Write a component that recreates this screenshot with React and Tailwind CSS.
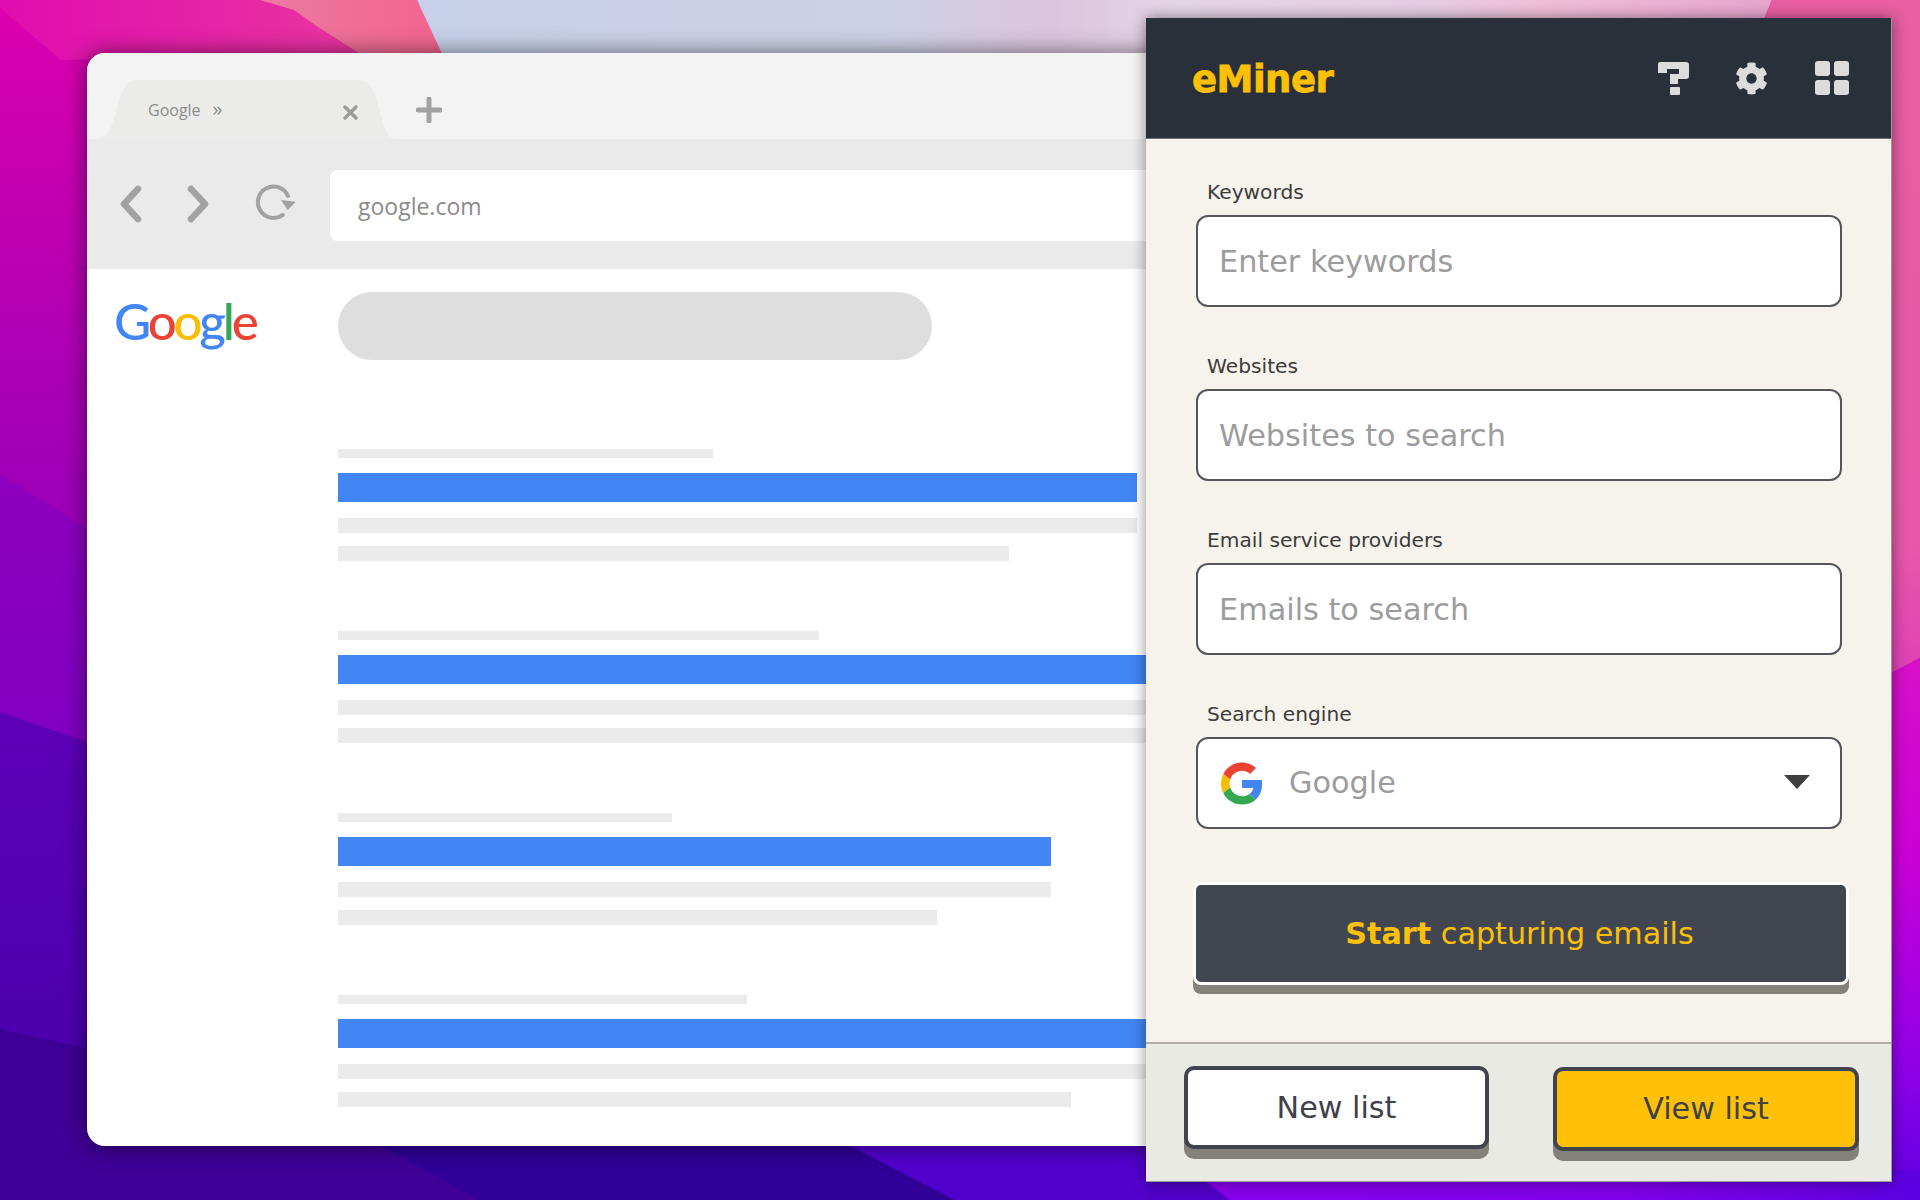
import React from "react";
import { FaCog } from "react-icons/fa";

function Wallpaper() {
  return (
    <svg className="absolute inset-0" width="1920" height="1200" viewBox="0 0 1920 1200">
      <defs>
        <linearGradient id="a" gradientUnits="userSpaceOnUse" x1="0" y1="0" x2="0" y2="500">
          <stop offset="0" stopColor="#dc00ae" />
          <stop offset="1" stopColor="#9c00b8" />
        </linearGradient>
        <linearGradient id="b" gradientUnits="userSpaceOnUse" x1="0" y1="474" x2="0" y2="740">
          <stop offset="0" stopColor="#8f00be" />
          <stop offset="1" stopColor="#8000c2" />
        </linearGradient>
        <linearGradient id="c" gradientUnits="userSpaceOnUse" x1="0" y1="712" x2="0" y2="1050">
          <stop offset="0" stopColor="#5e00b8" />
          <stop offset="1" stopColor="#4c00ae" />
        </linearGradient>
        <linearGradient id="top" x1="0" y1="0" x2="1" y2="0">
          <stop offset="0" stopColor="#e00cb0" />
          <stop offset="1" stopColor="#ea35a0" />
        </linearGradient>
        <linearGradient id="pk" x1="0" y1="0" x2="1" y2="0">
          <stop offset="0" stopColor="#ec7aa2" />
          <stop offset="1" stopColor="#f2638f" />
        </linearGradient>
        <linearGradient id="lav" x1="0" y1="0" x2="1" y2="0">
          <stop offset="0" stopColor="#c6d0e8" />
          <stop offset="0.36" stopColor="#ced0e6" />
          <stop offset="0.47" stopColor="#dcc4de" />
          <stop offset="0.56" stopColor="#e4d6e6" />
          <stop offset="0.75" stopColor="#e7cce2" />
          <stop offset="0.83" stopColor="#efbfd6" />
          <stop offset="1" stopColor="#e8a4cf" />
        </linearGradient>
        <linearGradient id="rt" x1="0" y1="0" x2="0" y2="1">
          <stop offset="0" stopColor="#e85fa3" />
          <stop offset="0.8" stopColor="#e758a8" />
          <stop offset="1" stopColor="#e040b8" />
        </linearGradient>
        <linearGradient id="rb" x1="0" y1="0" x2="0" y2="1">
          <stop offset="0" stopColor="#d810c8" />
          <stop offset="0.35" stopColor="#cc00d6" />
          <stop offset="0.75" stopColor="#9000e8" />
          <stop offset="1" stopColor="#5e00e0" />
        </linearGradient>
        <linearGradient id="bt" x1="0" y1="0" x2="1" y2="0">
          <stop offset="0" stopColor="#8800ec" />
          <stop offset="0.6" stopColor="#8000ea" />
          <stop offset="1" stopColor="#5c00e0" />
        </linearGradient>
      </defs>
      <rect width="1920" height="1200" fill="url(#a)" />
      <polygon points="0,0 300,0 360,53 61,60 0,8" fill="url(#top)" />
      <polygon points="0,474 87,528 1200,528 1200,1200 0,1200" fill="url(#b)" />
      <polygon points="0,712 87,742 1200,742 1200,1200 0,1200" fill="url(#c)" />
      <polygon points="0,1029 87,1048 1200,1048 1200,1200 0,1200" fill="#3e0096" />
      <path d="M260 0 H417 L445 53 H359 L318 27 L294 10 Z" fill="url(#pk)" />
      <polygon points="417,0 1772,0 1747,60 445,60" fill="url(#lav)" />
      <polygon points="1772,0 1920,0 1920,658 1880,679 1700,679 1700,60 1747,60" fill="url(#rt)" />
      <polygon points="1880,679 1920,658 1920,1200 1880,1200" fill="url(#rb)" />
      <polygon points="380,1146 850,1146 960,1200 480,1200" fill="#300098" />
      <polygon points="850,1146 1220,1146 1220,1200 955,1200" fill="#5200cc" />
      <polygon points="1190,1170 1920,1170 1920,1200 1230,1200" fill="url(#bt)" />
      <polygon points="1146,1170 1190,1170 1230,1200 1146,1200" fill="#5000c8" />
    </svg>
  );
}

function ResultRow({ small, blue, line1, line2 }) {
  return (
    <div className="flex flex-col mb-[70px]">
      <div className="h-[9px] bg-[#ebebeb]" style={{ width: small }} />
      <div className="h-[29px] mt-[15px] bg-[#4285f4]" style={{ width: blue }} />
      <div className="h-[15px] mt-[16px] bg-[#ebebeb]" style={{ width: line1 }} />
      <div className="h-[15px] mt-[13px] bg-[#ebebeb]" style={{ width: line2 }} />
    </div>
  );
}

function BrowserWindow() {
  return (
    <div className="absolute left-[87px] top-[53px] w-[1160px] h-[1093px] rounded-[18px] bg-white overflow-hidden shadow-[0_0_22px_rgba(0,0,0,0.55)] font-['Open_Sans',sans-serif]">
      <div className="h-[86px] bg-[#f3f3f3] flex items-end pl-[9px]">
        <div className="relative w-[301px] h-[59px] flex items-center">
          <svg className="absolute inset-0" width="301" height="59" viewBox="0 0 301 59">
            <path d="M0 59 C14 59 17 42 21 28 C25 12 29 0 42 0 H262 C275 0 279 12 283 28 C287 42 290 59 301 59 Z" fill="#ebebea" />
          </svg>
          <span className="relative ml-[52px] text-[16px] text-[#8c8c8c] leading-none">Google</span>
          <span className="relative ml-[12px] text-[20px] text-[#8c8c8c] leading-none -mt-[2px]">»</span>
          <svg className="absolute left-[247px] top-[25px]" width="15" height="15" viewBox="0 0 15 15">
            <path d="M2 2 L13 13 M13 2 L2 13" stroke="#9b9b9b" strokeWidth="3.4" strokeLinecap="round" />
          </svg>
        </div>
        <svg className="ml-[19px] mb-[16px]" width="26" height="26" viewBox="0 0 26 26">
          <path d="M13 2 V24 M2 13 H24" stroke="#a2a2a2" strokeWidth="5" strokeLinecap="round" />
        </svg>
      </div>
      <div className="h-[130px] bg-[#eaeaea] flex items-start">
        <svg className="ml-[32px] mt-[46px]" width="24" height="38" viewBox="0 0 24 38">
          <path d="M19 4 L5 19 L19 34" fill="none" stroke="#a2a2a2" strokeWidth="6.5" strokeLinecap="round" strokeLinejoin="round" />
        </svg>
        <svg className="ml-[43px] mt-[46px]" width="24" height="38" viewBox="0 0 24 38">
          <path d="M5 4 L19 19 L5 34" fill="none" stroke="#a2a2a2" strokeWidth="6.5" strokeLinecap="round" strokeLinejoin="round" />
        </svg>
        <svg className="ml-[45px] mt-[45px]" width="42" height="38" viewBox="0 0 42 38">
          <path d="M27.7 31 A15.7 15.7 0 1 1 33 12" fill="none" stroke="#a2a2a2" strokeWidth="4" strokeLinecap="round" />
          <path d="M26 16 L40.7 17.7 L32.7 26 Z" fill="#a2a2a2" />
        </svg>
        <div className="ml-[33px] mt-[31px] h-[71px] flex-1 bg-white rounded-l-[8px] flex items-center pl-[28px] pt-[2px] text-[23px] text-[#8b8b8b]">
          google.com
        </div>
      </div>
      <div className="flex">
        <div className="w-[251px] pl-[27px] pt-[20px] text-[51px] leading-[64px] font-medium tracking-[-3.2px] font-['Lato',sans-serif]">
          <span className="text-[#4285f4]">G</span>
          <span className="text-[#ea4335]">o</span>
          <span className="text-[#fbbc05]">o</span>
          <span className="text-[#4285f4]">g</span>
          <span className="text-[#34a853]">l</span>
          <span className="text-[#ea4335]">e</span>
        </div>
        <div className="flex-1 flex flex-col pt-[23px]">
          <div className="w-[594px] h-[68px] rounded-full bg-[#dedede] mb-[89px]" />
          <ResultRow small={375} blue={799} line1={799} line2={671} />
          <ResultRow small={481} blue={830} line1={830} line2={830} />
          <ResultRow small={334} blue={713} line1={713} line2={599} />
          <ResultRow small={409} blue={830} line1={830} line2={733} />
        </div>
      </div>
    </div>
  );
}

function Field({ label, children }) {
  return (
    <div className="flex flex-col mb-[45px]">
      <div className="h-[28px] mb-[9px] flex items-center pl-[11px] text-[20.2px] text-[#3c3c3c]">{label}</div>
      {children}
    </div>
  );
}

function TextInput({ placeholder }) {
  return (
    <input
      placeholder={placeholder}
      className="w-[646px] h-[92px] rounded-[12px] border-[2px] border-[#55565c] bg-white px-[21px] text-[30.3px] outline-none placeholder:text-[#9c9c9c]"
    />
  );
}

function Panel() {
  return (
    <div className="absolute left-[1146px] top-[18px] w-[746px] h-[1164px] flex flex-col border-r border-b border-[#9a9a96] shadow-[0_0_14px_rgba(0,0,0,0.45)] font-['DejaVu_Sans',sans-serif]">
      <div className="h-[121px] bg-[#29303a] border-b-[1px] border-[#6c7178] flex items-center pl-[46px] pr-[42px]">
        <span className="text-[37px] mt-[2px] font-bold leading-none text-[#fdc006] tracking-[-0.5px] [-webkit-text-stroke:0.8px_#fdc006]">eMiner</span>
        <div className="ml-auto flex items-center">
          <svg width="31" height="33" viewBox="0 0 31 33" className="mt-[1px]">
            <path d="M2 0 H28 a3 3 0 0 1 3 3 V14 a3 3 0 0 1 -3 3 H20 V22 H12 V12 H21 V7 H9 V11 H0 V2 a2 2 0 0 1 2 -2 Z" fill="#dcdcdc" />
            <rect x="12" y="25" width="10" height="8" rx="1" fill="#dcdcdc" />
          </svg>
          <FaCog className="ml-[46px] text-[#dcdcdc] text-[33px]" />
          <div className="ml-[47px] grid grid-cols-2 gap-[4px]">
            <div className="w-[15px] h-[15px] rounded-[3px] bg-[#dcdcdc]" />
            <div className="w-[15px] h-[15px] rounded-[3px] bg-[#dcdcdc]" />
            <div className="w-[15px] h-[15px] rounded-[3px] bg-[#dcdcdc]" />
            <div className="w-[15px] h-[15px] rounded-[3px] bg-[#dcdcdc]" />
          </div>
        </div>
      </div>
      <div className="flex-1 bg-[#f6f3ec] pl-[50px] pt-[39px] flex flex-col items-start">
        <Field label="Keywords"><TextInput placeholder="Enter keywords" /></Field>
        <Field label="Websites"><TextInput placeholder="Websites to search" /></Field>
        <Field label="Email service providers"><TextInput placeholder="Emails to search" /></Field>
        <div className="flex flex-col">
          <div className="h-[28px] mb-[9px] flex items-center pl-[11px] text-[20.2px] text-[#3c3c3c]">Search engine</div>
          <div className="w-[646px] h-[92px] rounded-[12px] border-[2px] border-[#55565c] bg-white flex items-center pl-[23px] pr-[30px]">
            <svg width="42" height="43" viewBox="0 0 48 48">
              <path fill="#EA4335" d="M24 9.5c3.54 0 6.71 1.22 9.21 3.6l6.85-6.85C35.9 2.38 30.47 0 24 0 14.62 0 6.51 5.38 2.56 13.22l7.98 6.19C12.43 13.72 17.74 9.5 24 9.5z" />
              <path fill="#4285F4" d="M46.98 24.55c0-1.57-.15-3.09-.38-4.55H24v9.02h12.94c-.58 2.96-2.26 5.48-4.78 7.18l7.73 6c4.51-4.18 7.09-10.36 7.09-17.65z" />
              <path fill="#FBBC05" d="M10.53 28.59c-.48-1.45-.76-2.99-.76-4.59s.27-3.14.76-4.59l-7.98-6.19C.92 16.46 0 20.12 0 24c0 3.88.92 7.54 2.56 10.78l7.97-6.19z" />
              <path fill="#34A853" d="M24 48c6.48 0 11.93-2.13 15.89-5.81l-7.73-6c-2.15 1.45-4.92 2.3-8.16 2.3-6.26 0-11.57-4.22-13.47-9.91l-7.98 6.19C6.51 42.62 14.62 48 24 48z" />
            </svg>
            <span className="ml-[26px] text-[30.3px] text-[#9c9c9c]">Google</span>
            <svg className="ml-auto -mt-[2px]" width="26" height="14" viewBox="0 0 26 14">
              <path d="M0 0 H26 L13 14 Z" fill="#3f3f3f" />
            </svg>
          </div>
        </div>
        <div className="mt-[53px] -ml-[3px] w-[656px] h-[103px] rounded-[8px] border-[3px] border-white bg-[#414651] shadow-[0_9px_0_#84807a] flex items-center justify-center pr-[3px] text-[30.2px] text-[#fdc006]">
          <span><b className="font-bold">Start</b> capturing emails</span>
        </div>
      </div>
      <div className="h-[139px] bg-[#eaeae4] border-t-[2px] border-[#b0aea8] flex items-start justify-between pl-[38px] pr-[32px] pt-[22px]">
        <div className="w-[305px] h-[83px] rounded-[10px] border-[4px] border-[#41434d] bg-white shadow-[0_10px_0_#84807a] flex items-center justify-center text-[30.2px] text-[#3f414a]">New list</div>
        <div className="mt-[1px] w-[306px] h-[84px] rounded-[10px] border-[4px] border-[#41434d] bg-[#fec107] shadow-[0_10px_0_#84807a] flex items-center justify-center text-[30.2px] text-[#3f414a]">View list</div>
      </div>
    </div>
  );
}

export default function App() {
  return (
    <div className="relative w-[1920px] h-[1200px] overflow-hidden">
      <Wallpaper />
      <BrowserWindow />
      <Panel />
    </div>
  );
}
